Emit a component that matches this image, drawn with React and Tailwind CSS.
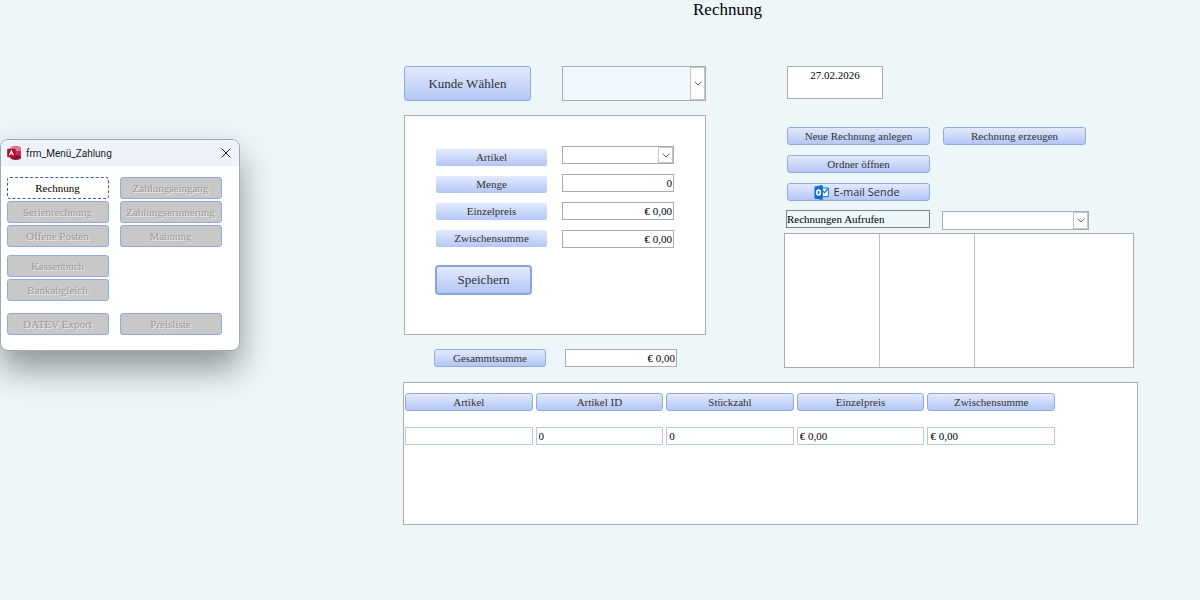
import React from "react";

const serif = "font-['Liberation_Serif',serif]";

const gradient = "bg-linear-to-b from-[#e3eafc] to-[#b3c6f4]";

const Button = ({ children, className = "h-[18px] text-[11px]" }) => (
  <button
    type="button"
    className={`flex items-center justify-center rounded-[3px] border border-[#8fabe3] text-[#333] whitespace-nowrap ${gradient} ${className}`}
  >
    {children}
  </button>
);

const Combo = ({ id, label, className = "", fieldClass = "bg-white" }) => (
  <div className={`relative border border-[#ababab] ${className}`}>
    <select
      id={id}
      aria-label={label}
      className={`block h-full w-full appearance-none text-[11px] outline-none ${fieldClass}`}
    >
      <option></option>
    </select>
    <span className="pointer-events-none absolute inset-y-0 right-0 flex w-[15px] items-center justify-center border border-[#c6c6c6] bg-[#fdfdfd]">
      <svg width="8" height="5" viewBox="0 0 8 5" fill="none" stroke="#666" strokeWidth="1">
        <path d="M0.7 0.7 4 4 7.3 0.7" />
      </svg>
    </span>
  </div>
);

const AccessIcon = () => (
  <svg width="14" height="14" viewBox="0 0 14 14">
    <path d="M3.5 2.2C3.5 1 6 0.3 8.7 0.3S13.8 1 13.8 2.2V11.8C13.8 13 11.4 13.7 8.7 13.7S3.5 13 3.5 11.8Z" fill="#b8173f" />
    <path d="M3.5 2.2C3.5 1 6 0.3 8.7 0.3S13.8 1 13.8 2.2V5.2H3.5Z" fill="#dc7d92" />
    <path d="M8 5.2H13.8V9.6H8Z" fill="#c52e50" />
    <path d="M3.5 9.6H13.8V11.8C13.8 13 11.4 13.7 8.7 13.7S3.5 13 3.5 11.8Z" fill="#8f1030" />
    <rect x="0.2" y="2.8" width="8.4" height="8.4" rx="0.8" fill="#b00f22" />
    <path d="M2.4 9.3 4.4 4.8 6.4 9.3M3.1 7.8H5.7" fill="none" stroke="#fff" strokeWidth="1.1" />
  </svg>
);

const OutlookIcon = () => (
  <svg width="15" height="15" viewBox="0 0 15 15">
    <path d="M8 3H14.4V11.6H8Z" fill="#fff" stroke="#1173c7" strokeWidth="1" />
    <path d="M8.4 5.4 10.4 7.8 14.2 3.6" fill="none" stroke="#1173c7" strokeWidth="1.3" />
    <path d="M0.5 1.6 8.7 0V15L0.5 13.4Z" fill="#0d70c5" />
    <ellipse cx="4.6" cy="7.5" rx="1.8" ry="2.5" fill="none" stroke="#fff" strokeWidth="1.5" />
  </svg>
);

const MenuButton = ({ children, active }) => (
  <button
    type="button"
    disabled={!active}
    className={`h-[22px] w-[102px] rounded-[3px] border pr-px text-[11px] whitespace-nowrap ${
      active
        ? "border-dashed border-[#3c5aa0] bg-white text-black"
        : "border-[#8fabe3] bg-[#c8c8c8] text-[#999] [text-shadow:1px_1px_0_#ececec]"
    }`}
  >
    {children}
  </button>
);

const MenuWindow = () => (
  <section className="absolute top-[139px] left-0 w-[240px] overflow-hidden rounded-[8px] border border-[#a3a8aa] bg-white pb-[15px] shadow-[0_18px_34px_rgba(0,0,0,0.4)]">
    <header className="flex h-[26px] items-center gap-[5px] bg-[#eef3fb] pr-2 pl-[6px]">
      <AccessIcon />
      <h2 className="flex-1 font-[Roboto,sans-serif] text-[10px] text-[#1b1b1b]">frm_Menü_Zahlung</h2>
      <button type="button" aria-label="Schließen" className="flex size-[11px] items-center justify-center">
        <svg width="10" height="10" viewBox="0 0 10 10" stroke="#222" strokeWidth="1">
          <path d="M0.6 0.6 9.4 9.4M9.4 0.6 0.6 9.4" />
        </svg>
      </button>
    </header>
    <nav className="px-[6px] pt-[11px]">
      <div className="grid grid-cols-[102px_102px] gap-x-[11px] gap-y-[2px]">
        <MenuButton active>Rechnung</MenuButton>
        <MenuButton>Zahlungseingang</MenuButton>
        <MenuButton>Serienrechnung</MenuButton>
        <MenuButton>Zahlungserinnerung</MenuButton>
        <MenuButton>Offene Posten</MenuButton>
        <MenuButton>Mahnung</MenuButton>
      </div>
      <div className="mt-2 flex flex-col gap-[2px]">
        <MenuButton>Kassenbuch</MenuButton>
        <MenuButton>Bankabgleich</MenuButton>
      </div>
      <div className="mt-3 flex gap-[11px]">
        <MenuButton>DATEV Export</MenuButton>
        <MenuButton>Preisliste</MenuButton>
      </div>
    </nav>
  </section>
);

const fields = [
  { id: "artikel", label: "Artikel" },
  { id: "menge", label: "Menge", value: "0" },
  { id: "einzelpreis", label: "Einzelpreis", value: "€ 0,00" },
  { id: "zwischensumme", label: "Zwischensumme", value: "€ 0,00" },
];

const ArticlePanel = () => (
  <div className="mt-[14px] h-[220px] border border-[#ababab] bg-white pt-[30px] pl-[31px]">
    <div className="flex gap-[15px]">
      <div className="flex w-[111px] flex-col gap-[10px] pt-[3px]">
        {fields.map((f) => (
          <label
            key={f.id}
            htmlFor={f.id}
            className={`flex h-[17px] items-center justify-center rounded-[2px] text-[11px] text-[#333] ${gradient}`}
          >
            {f.label}
          </label>
        ))}
      </div>
      <div className="flex w-[112px] flex-col gap-[10px]">
        {fields.map((f) =>
          f.value ? (
            <input
              key={f.id}
              id={f.id}
              defaultValue={f.value}
              className="h-[18px] w-full border border-[#ababab] bg-white px-px text-right text-[11px] text-black"
            />
          ) : (
            <Combo key={f.id} id={f.id} className="h-[18px]" />
          )
        )}
      </div>
    </div>
    <button
      type="button"
      className={`mt-[17px] -ml-px h-[30px] w-[97px] rounded-[4px] border-2 border-[#89a5de] text-[13px] text-[#333] ${gradient}`}
    >
      Speichern
    </button>
  </div>
);

const columns = [
  { name: "Artikel", value: "" },
  { name: "Artikel ID", value: "0" },
  { name: "Stückzahl", value: "0" },
  { name: "Einzelpreis", value: "€ 0,00" },
  { name: "Zwischensumme", value: "€ 0,00" },
];

const PositionTable = () => (
  <div className="mt-[14px] h-[143px] border border-[#ababab] bg-white pt-[10px] pl-px">
    <table className="w-[653px] table-fixed border-collapse">
      <thead>
        <tr>
          {columns.map((c) => (
            <th key={c.name} className="p-0 pr-[3px] pb-4 font-normal">
              <Button className="h-[18px] w-full text-[11px]">{c.name}</Button>
            </th>
          ))}
        </tr>
      </thead>
      <tbody>
        <tr>
          {columns.map((c) => (
            <td key={c.name} className="p-0 pr-[3px]">
              <input
                aria-label={c.name}
                defaultValue={c.value}
                className="block h-[18px] w-full border border-[#b5c7ea] bg-white px-[2px] text-[11px] text-black"
              />
            </td>
          ))}
        </tr>
      </tbody>
    </table>
  </div>
);

const InvoiceForm = () => (
  <main className="pr-[62px] pl-[403px]">
    <h1 className="h-[66px] pl-[290px] text-[17px] leading-5 text-black">Rechnung</h1>
    <div className="flex gap-[78px] pl-px">
      <div className="w-[302px] shrink-0">
        <div className="flex justify-between">
          <Button className="h-[35px] w-[127px] text-[13px]">Kunde Wählen</Button>
          <Combo label="Kunde" className="h-[35px] w-[144px]" fieldClass="bg-[#f0f8ff]" />
        </div>
        <ArticlePanel />
        <div className="mt-[14px] flex gap-[19px] pl-[30px]">
          <Button className="h-[18px] w-[112px] text-[11px]">Gesammtsumme</Button>
          <input
            aria-label="Gesammtsumme"
            defaultValue="€ 0,00"
            className="h-[18px] w-[112px] border border-[#ababab] bg-white px-px text-right text-[11px] text-black"
          />
        </div>
      </div>

      <div className="min-w-0 flex-1 pr-1">
        <textarea
          aria-label="Datum"
          defaultValue="27.02.2026"
          className="ml-[3px] block h-[33px] w-[96px] resize-none border border-[#ababab] bg-white text-center text-[11px] leading-4 text-black"
        />
        <div className="mt-7 ml-[3px] grid grid-cols-[143px_143px] gap-x-[13px] gap-y-[10px]">
          <Button>Neue Rechnung anlegen</Button>
          <Button>Rechnung erzeugen</Button>
          <Button className="col-start-1 h-[18px] text-[11px]">Ordner öffnen</Button>
          <Button className="col-start-1 h-[18px] gap-1 pr-[3px] font-['Open_Sans',sans-serif] text-[11px]">
            <OutlookIcon />
            E-mail Sende
          </Button>
        </div>
        <div className="mt-[9px] ml-[2px] flex gap-[12px]">
          <label
            htmlFor="rechnungen"
            className="h-[18px] w-[144px] border border-[#7f8486] text-[11px] leading-4 text-black"
          >
            Rechnungen Aufrufen
          </label>
          <Combo id="rechnungen" className="mt-px h-[19px] w-[147px]" />
        </div>
        <div
          role="listbox"
          aria-label="Rechnungen"
          className="mt-[3px] grid h-[135px] grid-cols-[95px_95px_1fr] divide-x divide-[#c3c3c3] border border-[#ababab] bg-white"
        >
          <div></div>
          <div></div>
          <div></div>
        </div>
      </div>
    </div>
    <PositionTable />
  </main>
);

export default function App() {
  return (
    <div className={`relative min-h-screen bg-[#edf6f9] ${serif}`}>
      <InvoiceForm />
      <MenuWindow />
    </div>
  );
}
